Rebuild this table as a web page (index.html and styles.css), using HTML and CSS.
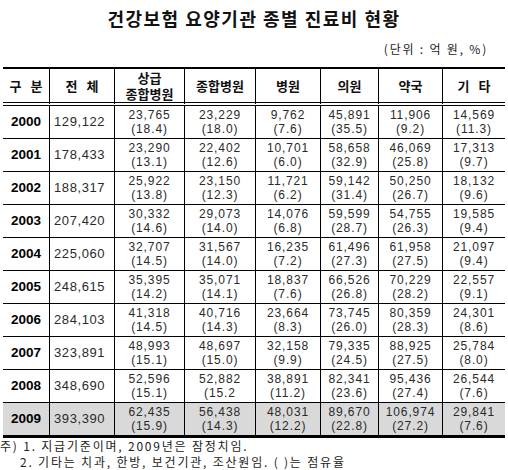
FILE: index.html
```html
<!DOCTYPE html>
<html>
<head>
<meta charset="utf-8">
<link rel="stylesheet" href="styles.css">
</head>
<body>
	<div class="title">건강보험 요양기관 종별 진료비 현황</div>
	<div class="unit">(단위 : 억 원, %)</div>
	<table class="stats">
		<colgroup>
			<col class="c-year"><col class="c-total"><col class="c-a"><col class="c-b">
			<col class="c-c"><col class="c-d"><col class="c-e"><col class="c-f">
		</colgroup>
		<thead>
			<tr>
				<th class="spread">구 분</th>
				<th class="spread">전 체</th>
				<th class="two">상급<br>종합병원</th>
				<th>종합병원</th>
				<th>병원</th>
				<th>의원</th>
				<th>약국</th>
				<th class="spread">기 타</th>
			</tr>
		</thead>
		<tbody>
			<tr><td class="year">2000</td><td class="total">129,122</td><td>23,765<br>(18.4)</td><td>23,229<br>(18.0)</td><td>9,762<br>(7.6)</td><td>45,891<br>(35.5)</td><td>11,906<br>(9.2)</td><td>14,569<br>(11.3)</td></tr>
			<tr><td class="year">2001</td><td class="total">178,433</td><td>23,290<br>(13.1)</td><td>22,402<br>(12.6)</td><td>10,701<br>(6.0)</td><td>58,658<br>(32.9)</td><td>46,069<br>(25.8)</td><td>17,313<br>(9.7)</td></tr>
			<tr><td class="year">2002</td><td class="total">188,317</td><td>25,922<br>(13.8)</td><td>23,150<br>(12.3)</td><td>11,721<br>(6.2)</td><td>59,142<br>(31.4)</td><td>50,250<br>(26.7)</td><td>18,132<br>(9.6)</td></tr>
			<tr><td class="year">2003</td><td class="total">207,420</td><td>30,332<br>(14.6)</td><td>29,073<br>(14.0)</td><td>14,076<br>(6.8)</td><td>59,599<br>(28.7)</td><td>54,755<br>(26.3)</td><td>19,585<br>(9.4)</td></tr>
			<tr><td class="year">2004</td><td class="total">225,060</td><td>32,707<br>(14.5)</td><td>31,567<br>(14.0)</td><td>16,235<br>(7.2)</td><td>61,496<br>(27.3)</td><td>61,958<br>(27.5)</td><td>21,097<br>(9.4)</td></tr>
			<tr><td class="year">2005</td><td class="total">248,615</td><td>35,395<br>(14.2)</td><td>35,071<br>(14.1)</td><td>18,837<br>(7.6)</td><td>66,526<br>(26.8)</td><td>70,229<br>(28.2)</td><td>22,557<br>(9.1)</td></tr>
			<tr><td class="year">2006</td><td class="total">284,103</td><td>41,318<br>(14.5)</td><td>40,716<br>(14.3)</td><td>23,664<br>(8.3)</td><td>73,745<br>(26.0)</td><td>80,359<br>(28.3)</td><td>24,301<br>(8.6)</td></tr>
			<tr><td class="year">2007</td><td class="total">323,891</td><td>48,993<br>(15.1)</td><td>48,697<br>(15.0)</td><td>32,158<br>(9.9)</td><td>79,335<br>(24.5)</td><td>88,925<br>(27.5)</td><td>25,784<br>(8.0)</td></tr>
			<tr><td class="year">2008</td><td class="total">348,690</td><td>52,596<br>(15.1)</td><td>52,882<br>(15.2</td><td>38,891<br>(11.2)</td><td>82,341<br>(23.6)</td><td>95,436<br>(27.4)</td><td>26,544<br>(7.6)</td></tr>
			<tr class="last"><td class="year">2009</td><td class="total">393,390</td><td>62,435<br>(15.9)</td><td>56,438<br>(14.3)</td><td>48,031<br>(12.2)</td><td>89,670<br>(22.8)</td><td>106,974<br>(27.2)</td><td>29,841<br>(7.6)</td></tr>
		</tbody>
	</table>
	<div class="notes">
		<div>주) 1. 지급기준이며, 2009년은 잠정치임.</div>
		<div class="indent">2. 기타는 치과, 한방, 보건기관, 조산원임. ( )는 점유율</div>
	</div>
</body>
</html>
```

FILE: styles.css
```css
body {
	margin: 0;
	width: 508px;
	background: #fff;
	color: #111;
	font-family: "Noto Sans CJK KR", sans-serif;
}
.title {
	height: 36px;
	line-height: 36px;
	text-align: center;
	font-size: 18px;
	font-weight: bold;
	letter-spacing: 1.5px;
}
.unit {
	height: 31px;
	line-height: 26px;
	text-align: right;
	padding-right: 20px;
	font-size: 12px;
	letter-spacing: 1.8px;
	color: #222;
}
.stats {
	margin-left: 3px;
	width: 502px;
	table-layout: fixed;
	border-collapse: separate;
	border-spacing: 0;
}
.c-year { width: 46px; }
.c-total { width: 65px; }
.c-a { width: 70px; }
.c-b { width: 71px; }
.c-c { width: 65px; }
.c-d { width: 58px; }
.c-e { width: 64px; }
.c-f { width: 63px; }

.stats th,
.stats td {
	box-sizing: border-box;
	padding: 0;
	border-left: 1px solid #000;
	border-bottom: 1px solid #000;
	text-align: center;
	vertical-align: middle;
}
.stats th:first-child,
.stats td:first-child {
	border-left: none;
}
.stats th {
	height: 37px;
	border-top: 2px solid #000;
	border-bottom: 4px double #000;
	font-size: 13px;
	font-weight: bold;
	line-height: 15px;
}
.stats th.spread {
	letter-spacing: 3px;
	padding-left: 3px;
}
.stats th.two {
	line-height: 16px;
	padding-top: 1px;
}
.stats td {
	height: 33px;
	font-family: "Liberation Sans", sans-serif;
	font-size: 12px;
	line-height: 14px;
	letter-spacing: 0.9px;
	color: #2a2a2a;
}
.stats td.year {
	font-size: 13.5px;
	font-weight: bold;
	letter-spacing: 0;
	color: #000;
}
.stats td.total {
	text-align: left;
	padding-left: 4px;
	font-size: 13px;
	letter-spacing: 0.6px;
}
.stats tr.last td {
	height: 35px;
	background: #d9d9d9;
	border-bottom: 3px solid #000;
}
.notes {
	font-size: 12px;
	line-height: 16px;
	letter-spacing: 1.8px;
	color: #222;
}
.notes .indent {
	padding-left: 20px;
}
```
